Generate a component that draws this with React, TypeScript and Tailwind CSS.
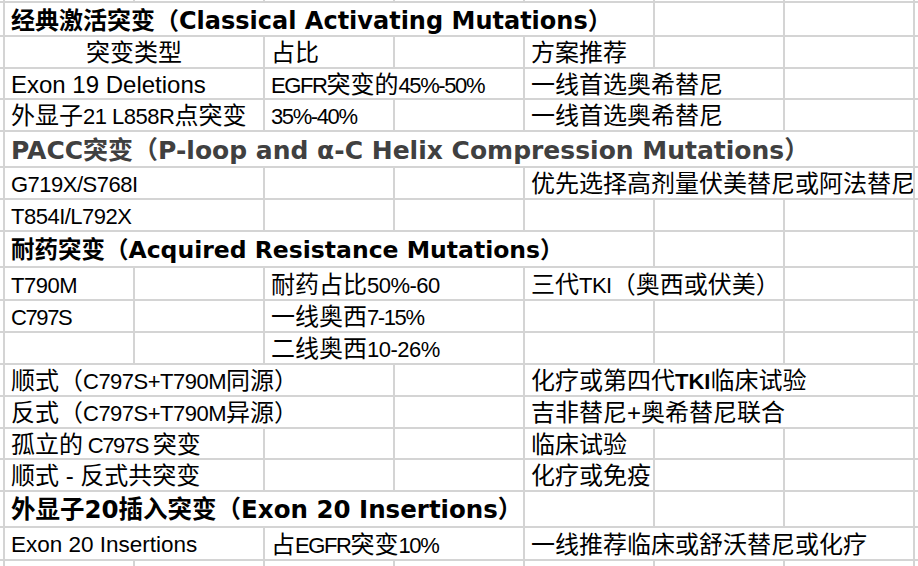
import type { ReactNode } from "react";

type Cell = { span?: number; text?: ReactNode; center?: boolean };
type Row = { h: string; title?: string; tone?: string; cells: Cell[] };

const spanCls: Record<number, string> = {
  1: "",
  2: "col-span-2",
  3: "col-span-3",
  4: "col-span-4",
  5: "col-span-5",
  7: "col-span-7",
};

// narrow latin / digit runs (the sheet renders these condensed)
function N({ children, size = "md" }: { children: ReactNode; size?: "sm" | "md" }) {
  return (
    <span className={size === "sm" ? "text-[22px] tracking-[-1.4px]" : "text-[22px] tracking-[-0.5px]"}>
      {children}
    </span>
  );
}

const empty = (n: number): Cell[] => Array.from({ length: n }, () => ({}));

const rows: Row[] = [
  {
    h: "h-[34px]",
    title: "text-[24px]",
    cells: [{ span: 5, text: "经典激活突变（Classical Activating Mutations）" }, {}, {}],
  },
  {
    h: "h-[32px]",
    cells: [
      { span: 2, text: "突变类型", center: true },
      { text: "占比" },
      {},
      { text: "方案推荐" },
      {},
      {},
    ],
  },
  {
    h: "h-[31px]",
    cells: [
      { span: 2, text: "Exon 19 Deletions" },
      {
        span: 2,
        text: (
          <>
            <N size="sm">EGFR</N>突变的<N size="sm">45%-50%</N>
          </>
        ),
      },
      { span: 2, text: "一线首选奥希替尼" },
      {},
    ],
  },
  {
    h: "h-[32px]",
    cells: [
      {
        span: 2,
        text: (
          <>
            外显子<N>21 L858R</N>点突变
          </>
        ),
      },
      { text: <N size="sm">35%-40%</N> },
      {},
      { span: 2, text: "一线首选奥希替尼" },
      {},
    ],
  },
  {
    h: "h-[36px]",
    title: "text-[25px]",
    tone: "text-[#404040]",
    cells: [{ span: 7, text: "PACC突变（P-loop and α-C Helix Compression Mutations）" }],
  },
  {
    h: "h-[32px]",
    cells: [
      { span: 2, text: <N>G719X/S768I</N> },
      {},
      {},
      { span: 3, text: "优先选择高剂量伏美替尼或阿法替尼" },
    ],
  },
  {
    h: "h-[32px]",
    cells: [{ span: 2, text: <N>T854I/L792X</N> }, ...empty(5)],
  },
  {
    h: "h-[36px]",
    title: "text-[23.5px]",
    cells: [{ span: 5, text: "耐药突变（Acquired Resistance Mutations）" }, {}, {}],
  },
  {
    h: "h-[33px]",
    cells: [
      { text: <N>T790M</N> },
      {},
      {
        span: 2,
        text: (
          <>
            耐药占比<N>50%-60</N>
          </>
        ),
      },
      {
        span: 2,
        text: (
          <>
            三代<N>TKI</N>（奥西或伏美）
          </>
        ),
      },
      {},
    ],
  },
  {
    h: "h-[32px]",
    cells: [
      { text: <N size="sm">C797S</N> },
      {},
      {
        span: 2,
        text: (
          <>
            一线奥西<N size="sm">7-15%</N>
          </>
        ),
      },
      {},
      {},
      {},
    ],
  },
  {
    h: "h-[32px]",
    cells: [
      {},
      {},
      {
        span: 2,
        text: (
          <>
            二线奥西<N>10-26%</N>
          </>
        ),
      },
      {},
      {},
      {},
    ],
  },
  {
    h: "h-[32px]",
    cells: [
      {
        span: 3,
        text: (
          <>
            顺式（<N>C797S+T790M</N>同源）
          </>
        ),
      },
      {},
      {
        span: 3,
        text: (
          <>
            化疗或第四代<span className="text-[22px] font-bold">TKI</span>临床试验
          </>
        ),
      },
    ],
  },
  {
    h: "h-[32px]",
    cells: [
      {
        span: 3,
        text: (
          <>
            反式（<N>C797S+T790M</N>异源）
          </>
        ),
      },
      {},
      { span: 3, text: "吉非替尼+奥希替尼联合" },
    ],
  },
  {
    h: "h-[31px]",
    cells: [
      {
        span: 2,
        text: (
          <>
            孤立的<N size="sm"> C797S </N>突变
          </>
        ),
      },
      {},
      {},
      { text: "临床试验" },
      {},
      {},
    ],
  },
  {
    h: "h-[32px]",
    cells: [{ span: 2, text: "顺式 - 反式共突变" }, {}, {}, { text: "化疗或免疫" }, {}, {}],
  },
  {
    h: "h-[36px]",
    title: "text-[24.5px]",
    cells: [{ span: 4, text: "外显子20插入突变（Exon 20 Insertions）" }, {}, {}, {}],
  },
  {
    h: "h-[33px]",
    cells: [
      { span: 2, text: <span className="text-[22.5px]">Exon 20 Insertions</span> },
      {
        span: 2,
        text: (
          <>
            占<N size="sm">EGFR</N>突变<N size="sm">10%</N>
          </>
        ),
      },
      { span: 3, text: "一线推荐临床或舒沃替尼或化疗" },
    ],
  },
  {
    h: "h-[32px]",
    cells: empty(7),
  },
];

const line = "border-r-2 border-b-2 border-[#d4d4d4]";

function SheetRow({ row }: { row: Row }) {
  const font = row.title
    ? `font-['DejaVu_Sans','Noto_Sans_CJK_SC',sans-serif] font-bold pt-[3px] ${row.title}`
    : "font-['Liberation_Sans','Noto_Sans_CJK_SC',sans-serif] pt-[2px] text-[24px]";
  return (
    <div className={`grid grid-cols-[5px_repeat(7,130px)_120px] ${row.h}`}>
      <div className={line} />
      {row.cells.map((c, i) => (
        <div
          key={i}
          className={`${line} ${spanCls[c.span ?? 1]} flex items-center overflow-hidden whitespace-pre leading-none ${
            c.center ? "justify-center" : "pl-[6px]"
          } ${font} ${row.tone ?? "text-black"}`}
        >
          <span>{c.text}</span>
        </div>
      ))}
      <div className={line} />
    </div>
  );
}

export default function App() {
  return (
    <div className="h-[566px] w-[918px] overflow-hidden bg-white">
      <div className="grid grid-cols-[5px_repeat(7,130px)_120px] h-[3px]">
        {Array.from({ length: 9 }, (_, i) => (
          <div key={i} className={line} />
        ))}
      </div>
      {rows.map((r, i) => (
        <SheetRow key={i} row={r} />
      ))}
    </div>
  );
}
